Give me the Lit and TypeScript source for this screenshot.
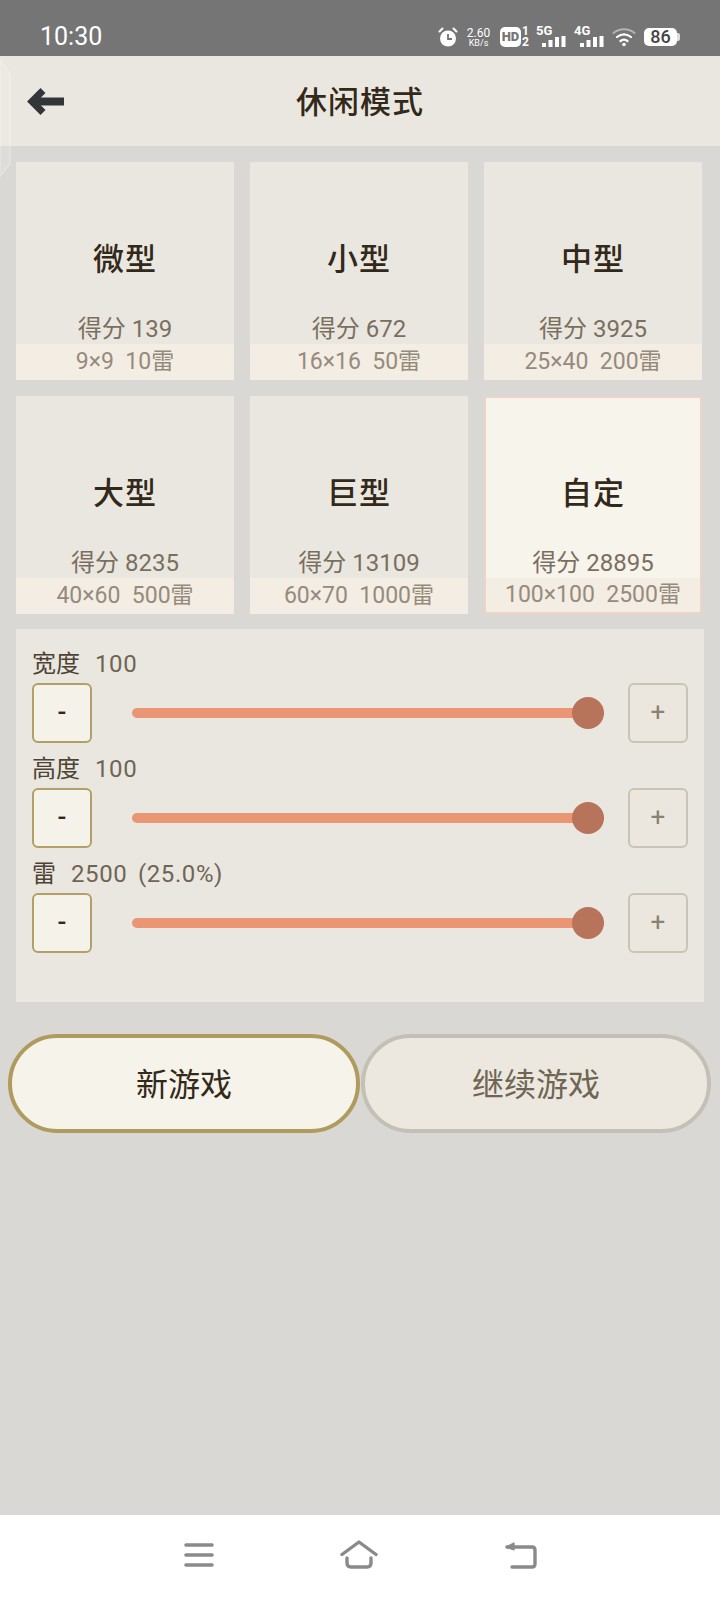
import { LitElement, css, html, svg } from 'lit';
import { customElement } from 'lit/decorators.js';

const modes = [
   { name: '微型', score: 139, size: '9×9  10雷' },
   { name: '小型', score: 672, size: '16×16  50雷' },
   { name: '中型', score: 3925, size: '25×40  200雷' },
   { name: '大型', score: 8235, size: '40×60  500雷' },
   { name: '巨型', score: 13109, size: '60×70  1000雷' },
   { name: '自定', score: 28895, size: '100×100  2500雷', active: true }
];

const sliders = [
   { label: '宽度', value: '100' },
   { label: '高度', value: '100' },
   { label: '雷', value: '2500 (25.0%)' }
];

// signal bars, first one is the shortest
const bars = svg`
   <rect x="0" y="7" width="4" height="4" />
   <rect x="6.500" y="4" width="4" height="7" />
   <rect x="13" y="1" width="4" height="10" />
   <rect x="19.500" y="0" width="4" height="11" />
`;

@customElement( 'app-root' )
export class AppRoot extends LitElement {
   renderStatus() {
      return html`
      <div class="status">
         <span class="time">10:30</span>
         <div class="status-icons">
            <svg class="alarm" width="20" height="20" viewBox="0 0 20 20">
               <circle cx="10" cy="11.500" r="8" fill="#fff" />
               <path d="M1.500 4.500 4.500 1.500M18.500 4.500 15.500 1.500" stroke="#fff" stroke-width="2" stroke-linecap="round" />
               <path d="M10 7v5h4" stroke="#757575" stroke-width="1.800" fill="none" />
            </svg>
            <div class="speed"><span>2.60</span><span class="unit">KB/s</span></div>
            <div class="hd"><span class="hd-box">HD</span><span class="sim"><span>1</span><span>2</span></span></div>
            <div class="net"><span>5G</span><svg width="24" height="11" fill="#fff">${ bars }</svg></div>
            <div class="net"><span>4G</span><svg width="24" height="11" fill="#fff">${ bars }</svg></div>
            <svg class="wifi" width="24" height="20" viewBox="0 0 24 20" fill="none" stroke="#fff" stroke-linecap="round">
               <path d="M1.500 6C7.500 1 16.500 1 22.500 6" stroke-width="2" stroke-opacity=".45" />
               <path d="M5 10c4.500-3.500 9.500-3.500 14 0" stroke-width="2.200" />
               <path d="M8.500 14c2.200-1.600 4.800-1.600 7 0" stroke-width="2.200" />
               <circle cx="12" cy="17.500" r="1.800" fill="#fff" stroke="none" />
            </svg>
            <div class="battery"><span>86</span><i></i></div>
         </div>
      </div>
      `;
   }

   renderNav() {
      return html`
      <div class="nav">
         <svg width="30" height="24" viewBox="0 0 30 24" fill="none" stroke="#8a8a8a" stroke-width="3.600" stroke-linecap="round">
            <path d="M2 2h26M2 12h26M2 22h26" />
         </svg>
         <svg width="38" height="29" viewBox="0 0 38 29" fill="none" stroke="#8a8a8a" stroke-width="3.400" stroke-linecap="round" stroke-linejoin="round">
            <path d="M2 14.500 19 2l17 12.500" />
            <path d="M7 18v5q0 4 4 4h16q4 0 4-4v-5" />
         </svg>
         <svg width="33" height="28" viewBox="0 0 33 28" fill="none" stroke="#8a8a8a" stroke-width="3.400" stroke-linecap="round" stroke-linejoin="round">
            <path d="M3 6h25q3 0 3 3v14q0 3-3 3H8" />
            <path d="M2 6 10 2v7z" fill="#8a8a8a" stroke-width="1.200" />
         </svg>
      </div>
      `;
   }

   render() {
      return html`
      <div class="screen">
         ${ this.renderStatus() }
         <header>
            <svg class="back" width="38" height="31" viewBox="0 0 38 31" fill="none" stroke="#333638">
               <path d="M37 15.500H8" stroke-width="8" />
               <path d="M16 4.500 5 15.500l11 11" stroke-width="7" />
            </svg>
            <h1>休闲模式</h1>
         </header>
         <main>
            <div class="grid">
               ${ modes.map( m => html`
               <div class="card ${ m.active ? 'active' : '' }">
                  <div class="name">${ m.name }</div>
                  <div class="score">得分 ${ m.score }</div>
                  <div class="size">${ m.size }</div>
               </div>
               ` ) }
            </div>
            <section class="panel">
               ${ sliders.map( s => html`
               <div class="label"><span>${ s.label }</span><span class="val">${ s.value }</span></div>
               <div class="row">
                  <button class="step minus">-</button>
                  <input type="range" min="0" max="100" value="100" />
                  <button class="step plus">+</button>
               </div>
               ` ) }
            </section>
            <div class="actions">
               <button class="pill primary">新游戏</button>
               <button class="pill">继续游戏</button>
            </div>
         </main>
         ${ this.renderNav() }
         <svg class="edge" width="14" height="120" viewBox="0 0 14 120">
            <path d="M0 2 10 16v90L0 118z" fill="#fff" fill-opacity=".1" stroke="#fff" stroke-opacity=".22" stroke-width="2" />
         </svg>
      </div>
      `;
   }

   static styles = css`
  :host {
    display: block;
    font-family: Roboto, "Noto Sans CJK SC", sans-serif;
  }
  .screen {
    position: relative;
    display: flex;
    flex-direction: column;
    width: 720px;
    height: 1600px;
    background: #d9d8d5;
    overflow: hidden;
  }
  .edge {
    position: absolute;
    left: 0;
    top: 58px;
  }
  .status {
    display: flex;
    align-items: center;
    justify-content: space-between;
    height: 56px;
    padding: 18px 40px 0 40px;
    box-sizing: border-box;
    background: #757575;
    color: #fff;
    flex: none;
  }
  .time {
    font-size: 25px;
    line-height: 36px;
  }
  .status-icons {
    display: flex;
    align-items: center;
    height: 38px;
  }
  .alarm {
    margin-right: 8px;
  }
  .speed {
    display: flex;
    flex-direction: column;
    align-items: center;
    width: 25px;
    font-size: 12px;
    line-height: 12px;
    margin-right: 9px;
  }
  .speed .unit {
    font-size: 9px;
    line-height: 9px;
  }
  .hd {
    display: flex;
    align-items: center;
    width: 36px;
  }
  .hd-box {
    background: #fff;
    color: #757575;
    font-size: 13px;
    font-weight: 900;
    line-height: 20px;
    width: 21px;
    text-align: center;
    border-radius: 5px;
  }
  .sim {
    display: flex;
    flex-direction: column;
    font-size: 12px;
    font-weight: 700;
    line-height: 11px;
    margin-left: 1px;
  }
  .net {
    position: relative;
    width: 38px;
    height: 22px;
  }
  .net span {
    position: absolute;
    left: 0;
    top: -3px;
    font-size: 13px;
    font-weight: 700;
    line-height: 16px;
  }
  .net svg {
    position: absolute;
    left: 6px;
    top: 10px;
  }
  .wifi {
    margin-right: 8px;
  }
  .battery {
    position: relative;
    width: 33px;
    margin-right: 3px;
    height: 18px;
    background: #fff;
    border-radius: 5px;
    color: #444;
    font-size: 18px;
    font-weight: 500;
    line-height: 18px;
    text-align: center;
  }
  .battery i {
    position: absolute;
    right: -3px;
    top: 5px;
    width: 3px;
    height: 8px;
    border-radius: 0 2px 2px 0;
    background: #ddd;
  }
  header {
    position: relative;
    display: flex;
    align-items: center;
    justify-content: center;
    height: 90px;
    padding-bottom: 3px;
    box-sizing: border-box;
    background: #eae7e0;
    flex: none;
  }
  .back {
    position: absolute;
    left: 27px;
    top: 30px;
  }
  h1 {
    margin: 0;
    font-size: 31px;
    font-weight: 500;
    color: #33291a;
    letter-spacing: 1px;
  }
  main {
    flex: 1;
    padding: 16px 16px 0;
    min-height: 0;
  }
  .grid {
    display: grid;
    grid-template-columns: repeat(3, 218px);
    grid-auto-rows: 218px;
    gap: 16px;
  }
  .card {
    display: flex;
    flex-direction: column;
    align-items: center;
    box-sizing: border-box;
    background: #eae7e0;
    text-align: center;
  }
  .card.active {
    background: #f7f4ec;
    border: 2px solid #ecd5c8;
  }
  .name {
    flex: 1;
    display: flex;
    align-items: center;
    padding-top: 35px;
    font-size: 31px;
    font-weight: 500;
    color: #33291a;
    letter-spacing: 1px;
  }
  .score {
    font-size: 24px;
    line-height: 28px;
    color: #7a6f5f;
    margin-bottom: 1px;
  }
  .size {
    align-self: stretch;
    height: 36px;
    font-size: 23px;
    line-height: 36px;
    color: #958b7d;
    background: #f4ede3;
    white-space: pre;
  }
  .active .size { height: 34px; line-height: 34px; }
  .active .name { padding-top: 33px; }
  .panel {
    box-sizing: border-box;
    width: 688px;
    height: 373px;
    margin-top: 15px;
    padding: 9px 16px 0;
    background: #eae7e0;
  }
  .label {
    display: flex;
    align-items: flex-end;
    gap: 15px;
    height: 45px;
    padding-bottom: 1px;
    font-size: 24px;
    line-height: 36px;
    color: #4d4334;
    box-sizing: border-box;
  }
  .val {
    color: #6f6554;
    letter-spacing: .6px;
    word-spacing: 4px;
  }
  .row {
    display: flex;
    align-items: center;
    height: 60px;
  }
  .step {
    box-sizing: border-box;
    width: 60px;
    height: 60px;
    padding: 0 0 2px;
    border-radius: 6px;
    font-family: inherit;
    font-size: 26px;
    flex: none;
  }
  .minus {
    background: #f5f2ea;
    border: 2px solid #b39f68;
    color: #33291a;
    font-weight: 500;
  }
  .plus {
    background: #ece7de;
    border: 2px solid #c9c4b6;
    color: #8a8270;
  }
  input[type=range] {
    -webkit-appearance: none;
    appearance: none;
    width: 472px;
    height: 32px;
    margin: 0 24px 0 40px;
    background: transparent;
    flex: none;
  }
  input[type=range]::-webkit-slider-runnable-track {
    height: 10px;
    border-radius: 5px;
    background: #ea9675;
  }
  input[type=range]::-webkit-slider-thumb {
    -webkit-appearance: none;
    width: 32px;
    height: 32px;
    margin-top: -11px;
    border-radius: 50%;
    background: #b8745a;
  }
  .actions {
    display: flex;
    gap: 1px;
    margin: 32px -7px 0 -8px;
  }
  .pill {
    box-sizing: border-box;
    width: 350px;
    height: 99px;
    border-radius: 50px;
    background: #ece8df;
    border: 4px solid #c4c0b6;
    font-family: inherit;
    font-size: 32px;
    line-height: 40px;
    color: #6f6554;
    padding: 2px 0 0;
  }
  .pill.primary {
    width: 352px;
    background: #f5f3ea;
    border-color: #b09b5e;
    color: #33291a;
  }
  .nav {
    display: flex;
    align-items: center;
    justify-content: center;
    gap: 126px;
    height: 85px;
    background: #fff;
    flex: none;
    padding-bottom: 6px;
    box-sizing: border-box;
  }
  `;
}

declare global {
   interface HTMLElementTagNameMap {
      'app-root': AppRoot;
   }
};
